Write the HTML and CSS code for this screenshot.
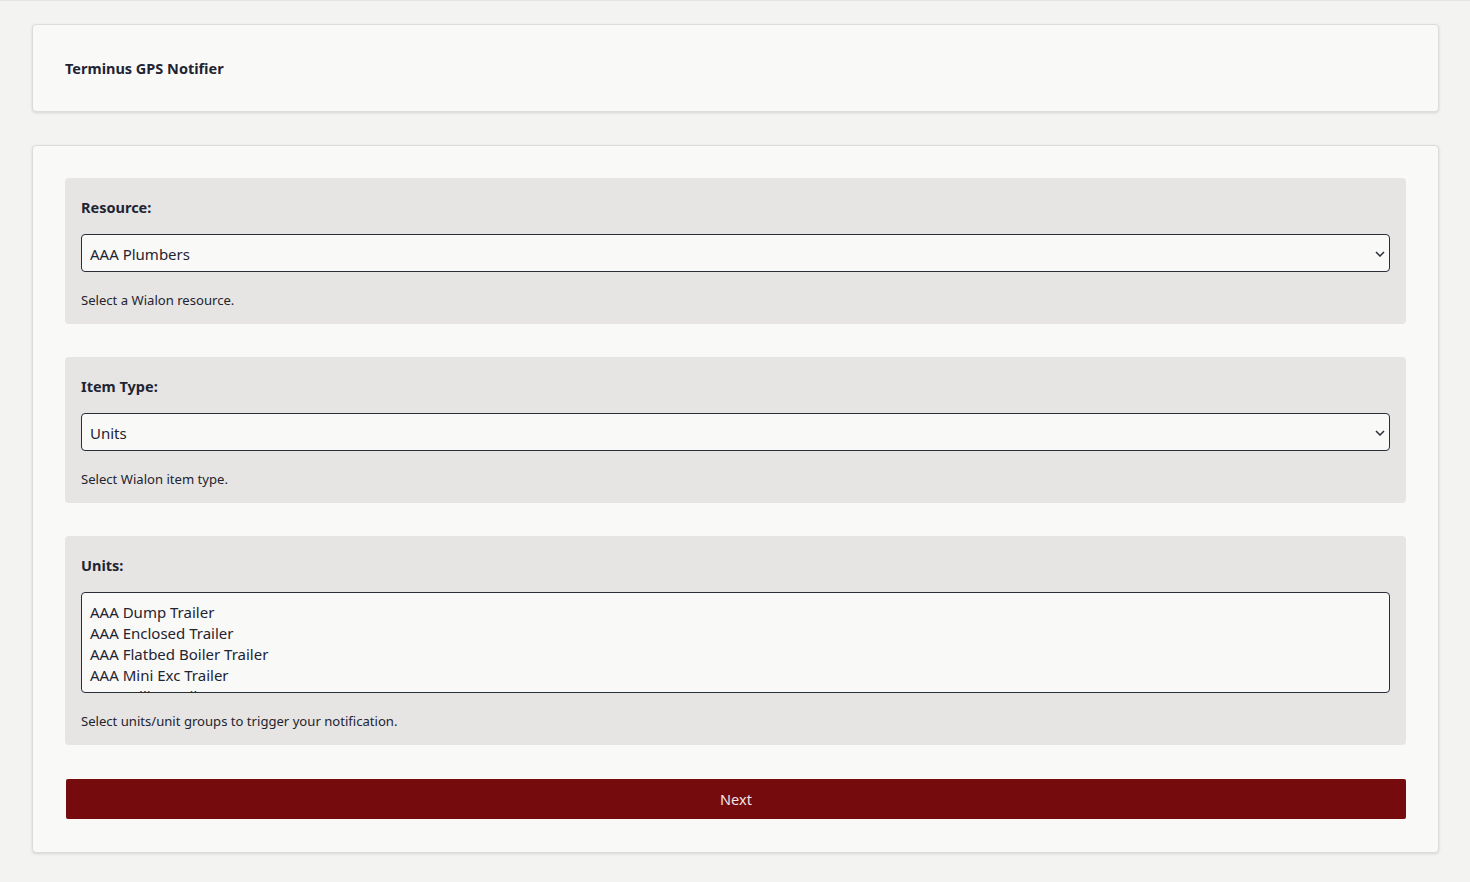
FILE: index.html
```html
<!DOCTYPE html>
<html lang="en">
<head>
<meta charset="utf-8">
<title>Terminus GPS Notifier</title>
<link rel="stylesheet" href="styles.css">
</head>
<body>
<div class="topline"></div>
<main class="page">
  <header class="card header-card">
    <h1 class="title">Terminus GPS Notifier</h1>
  </header>
  <form class="card form-card">
    <div class="field">
      <label class="field-label" for="resource">Resource:</label>
      <div class="select-wrap">
        <select id="resource" class="select">
          <option>AAA Plumbers</option>
        </select>
        <svg class="chev" width="10" height="6" viewBox="0 0 10 6"><path d="M1 1 L5 5 L9 1" fill="none" stroke="#2b2f36" stroke-width="1.5"/></svg>
      </div>
      <p class="help">Select a Wialon resource.</p>
    </div>
    <div class="field">
      <label class="field-label" for="itemtype">Item Type:</label>
      <div class="select-wrap">
        <select id="itemtype" class="select">
          <option>Units</option>
        </select>
        <svg class="chev" width="10" height="6" viewBox="0 0 10 6"><path d="M1 1 L5 5 L9 1" fill="none" stroke="#2b2f36" stroke-width="1.5"/></svg>
      </div>
      <p class="help">Select Wialon item type.</p>
    </div>
    <div class="field">
      <label class="field-label" for="units">Units:</label>
      <div class="listbox" id="units">
        <div class="opt">AAA Dump Trailer</div>
        <div class="opt">AAA Enclosed Trailer</div>
        <div class="opt">AAA Flatbed Boiler Trailer</div>
        <div class="opt">AAA Mini Exc Trailer</div>
        <div class="opt">AAA Utility Trailer</div>
      </div>
      <p class="help">Select units/unit groups to trigger your notification.</p>
    </div>
    <button type="button" class="btn-next">Next</button>
  </form>
</main>
</body>
</html>
```

FILE: styles.css
```css
html, body {
  margin: 0;
  padding: 0;
}
body {
  background: #f3f3f2;
  font-family: "Noto Sans", "Open Sans", "Liberation Sans", sans-serif;
  color: #1f2430;
}
.topline {
  height: 1px;
  background: #e4e4e3;
}
.page {
  padding: 23px 31px 24px 32px;
  display: flex;
  flex-direction: column;
  gap: 33px;
}
.card {
  background: #f9f9f8;
  border: 1px solid #dcdcdb;
  border-radius: 4px;
  box-shadow: 0 1px 3px rgba(0, 0, 0, 0.12);
}
.header-card {
  padding: 31px 32px;
}
.title {
  margin: 0;
  font-size: 14.5px;
  line-height: 24px;
  font-weight: 700;
  color: #1e2433;
}
.form-card {
  padding: 32px 32px 33px 32px;
  display: flex;
  flex-direction: column;
  gap: 33px;
}
.field {
  background: #e6e5e3;
  border-radius: 4px;
  padding: 17px 16px 12px 16px;
  display: flex;
  flex-direction: column;
}
.field-label {
  font-size: 14.5px;
  line-height: 24px;
  font-weight: 700;
  color: #1e2433;
  margin-bottom: 15px;
}
.select-wrap {
  position: relative;
}
.select {
  appearance: none;
  -webkit-appearance: none;
  width: 100%;
  height: 38px;
  box-sizing: border-box;
  border: 1px solid #2a2e36;
  border-radius: 4px;
  background: #f9f9f8;
  padding: 1px 8px 0 8px;
  font-family: inherit;
  font-size: 15px;
  color: #1f2430;
  margin: 0;
}
.chev {
  position: absolute;
  right: 5px;
  top: 17px;
  pointer-events: none;
}
.listbox {
  height: 101px;
  box-sizing: border-box;
  border: 1px solid #2a2e36;
  border-radius: 4px;
  background: #f9f9f8;
  padding: 9px 8px 0 8px;
  overflow: hidden;
}
.opt {
  font-size: 15px;
  line-height: 21px;
  color: #1f2430;
  white-space: nowrap;
}
.help {
  margin: 16px 0 0 0;
  font-size: 13.1px;
  line-height: 24px;
  color: #1f2430;
}
.btn-next {
  height: 40px;
  margin-top: 1px;
  margin-left: 1px;
  border: none;
  border-radius: 2px;
  background: #760b0e;
  color: #f1e6e6;
  font-family: inherit;
  font-size: 14.5px;
  cursor: pointer;
}
```
